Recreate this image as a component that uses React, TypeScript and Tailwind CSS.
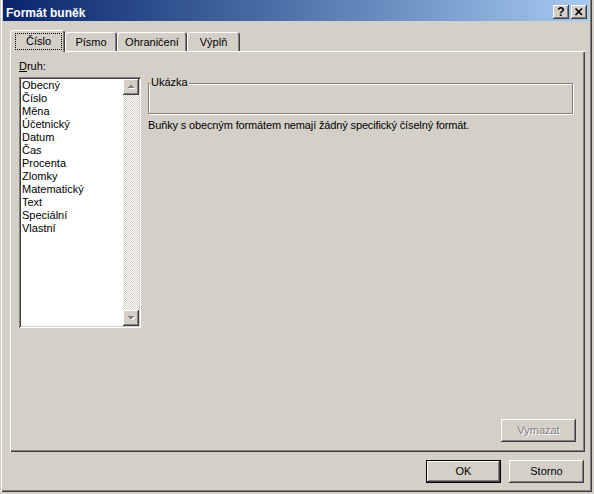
import type { ReactNode } from 'react';

const raised =
  'shadow-[inset_-1px_-1px_#404040,inset_1px_1px_#fff,inset_-2px_-2px_#808080]';
const sunken =
  'shadow-[inset_1px_1px_#808080,inset_-1px_-1px_#fff,inset_2px_2px_#404040,inset_-2px_-2px_#d4d0c8]';
const tabEdge =
  'shadow-[inset_1px_1px_#fff,inset_-1px_0_#404040,inset_-2px_0_#808080]';

const kinds = [
  'Obecný',
  'Číslo',
  'Měna',
  'Účetnický',
  'Datum',
  'Čas',
  'Procenta',
  'Zlomky',
  'Matematický',
  'Text',
  'Speciální',
  'Vlastní',
];

function Button({
  children,
  isDefault,
  disabled,
}: {
  children: ReactNode;
  isDefault?: boolean;
  disabled?: boolean;
}) {
  if (isDefault) {
    return (
      <div className="h-[23px] w-[75px] border border-black">
        <div className={`flex h-full w-full items-center justify-center ${raised}`}>
          {children}
        </div>
      </div>
    );
  }
  return (
    <div
      className={`flex h-[23px] w-[75px] items-center justify-center ${raised} ${
        disabled ? 'text-[#808080] [text-shadow:1px_1px_0_#fff]' : ''
      }`}
    >
      {children}
    </div>
  );
}

function Arrow({ up }: { up?: boolean }) {
  return (
    <div className={`h-[16px] w-[16px] bg-[#d4d0c8] ${raised}`}>
      <svg width="16" height="16" viewBox="0 0 16 16" shapeRendering="crispEdges">
        {up ? (
          <>
            <polygon points="5,10 8.5,6.5 12,10" fill="#fff" />
            <polygon points="4,9 7.5,5.5 11,9" fill="#808080" />
          </>
        ) : (
          <>
            <polygon points="5,7 8.5,10.5 12,7" fill="#fff" />
            <polygon points="4,6 7.5,9.5 11,6" fill="#808080" />
          </>
        )}
      </svg>
    </div>
  );
}

export default function App() {
  return (
    <div className="h-[494px] w-[594px] bg-[#d4d0c8] font-['Liberation_Sans',Arial,sans-serif] text-[11px] leading-[13px] text-black">
      <div className="flex h-[492px] w-[592px] flex-col px-[3px] shadow-[inset_1px_0_#d4d0c8,inset_2px_0_#fff,inset_-1px_-1px_#404040,inset_-2px_-2px_#808080]">
        {/* title bar */}
        <div className="flex h-[21px] items-start bg-linear-to-r from-[#0a246a] to-[#a6caf0] pl-[3px] pr-[2px] pt-[5px]">
          <span className="flex-1 pt-[1px] text-[12px] font-bold leading-[14px] text-white">
            Formát buněk
          </span>
          <div
            className={`flex h-[14px] w-[16px] items-center justify-center bg-[#d4d0c8] text-[12px] font-bold leading-[14px] ${raised}`}
          >
            ?
          </div>
          <div className={`ml-[2px] h-[14px] w-[16px] bg-[#d4d0c8] ${raised}`}>
            <svg width="16" height="14" viewBox="0 0 16 14">
              <path d="M4.5 3.5 L11 10 M11 3.5 L4.5 10" stroke="#000" strokeWidth="1.7" />
            </svg>
          </div>
        </div>

        {/* tabs */}
        <div className="ml-[7px] mt-[9px] flex h-[21px] items-end">
          <div
            className={`relative z-10 -mb-px flex h-[22px] w-[55px] rounded-t-[3px] bg-[#d4d0c8] pl-[5px] pr-[3px] pt-[3px] ${tabEdge}`}
          >
            <span className="flex h-[17px] w-full items-center justify-center border border-dotted border-black">
              Číslo
            </span>
          </div>
          <div
            className={`flex h-[19px] w-[52px] justify-center rounded-t-[3px] pt-[4px] ${tabEdge}`}
          >
            Písmo
          </div>
          <div
            className={`flex h-[19px] w-[70px] justify-center rounded-t-[3px] pt-[4px] ${tabEdge}`}
          >
            Ohraničení
          </div>
          <div
            className={`flex h-[19px] w-[53px] justify-center rounded-t-[3px] pt-[4px] ${tabEdge}`}
          >
            Výplň
          </div>
        </div>

        {/* tab page */}
        <div className="ml-[7px] flex h-[401px] w-[575px] flex-col justify-between pb-[10px] pl-[9px] pr-[9px] pt-[9px] shadow-[inset_1px_1px_#fff,inset_-1px_-1px_#404040,inset_-2px_-2px_#808080]">
          <div className="flex gap-[7px]">
            <div className="flex w-[122px] flex-col">
              <div>
                <span className="underline">D</span>ruh:
              </div>
              <div className={`mt-[4px] flex h-[251px] bg-white p-[2px] ${sunken}`}>
                <div className="flex-1 pl-[1px]">
                  {kinds.map((k) => (
                    <div key={k} className="h-[13px] whitespace-nowrap">
                      {k}
                    </div>
                  ))}
                </div>
                <div className="flex w-[16px] flex-col justify-between bg-[image:repeating-conic-gradient(#fff_0_25%,#d4d0c8_0_50%)] bg-[length:2px_2px]">
                  <Arrow up />
                  <Arrow />
                </div>
              </div>
            </div>

            <div className="flex w-[426px] flex-col">
              <div className="mt-[23px] h-[31px] w-[425px] border border-[#808080] shadow-[1px_1px_0_#fff,inset_1px_1px_#fff]">
                <div className="-mt-[8px] ml-[1px] w-fit bg-[#d4d0c8] px-[1px]">Ukázka</div>
              </div>
              <p className="mt-[5px] whitespace-nowrap tracking-[-0.14px]">
                Buňky s obecným formátem nemají žádný specifický číselný formát.
              </p>
            </div>
          </div>

          <div className="self-end">
            <Button disabled>Vymazat</Button>
          </div>
        </div>

        {/* dialog buttons */}
        <div className="mt-[8px] flex justify-end gap-[8px] pr-[5px]">
          <Button isDefault>OK</Button>
          <Button>Storno</Button>
        </div>
      </div>
    </div>
  );
}
